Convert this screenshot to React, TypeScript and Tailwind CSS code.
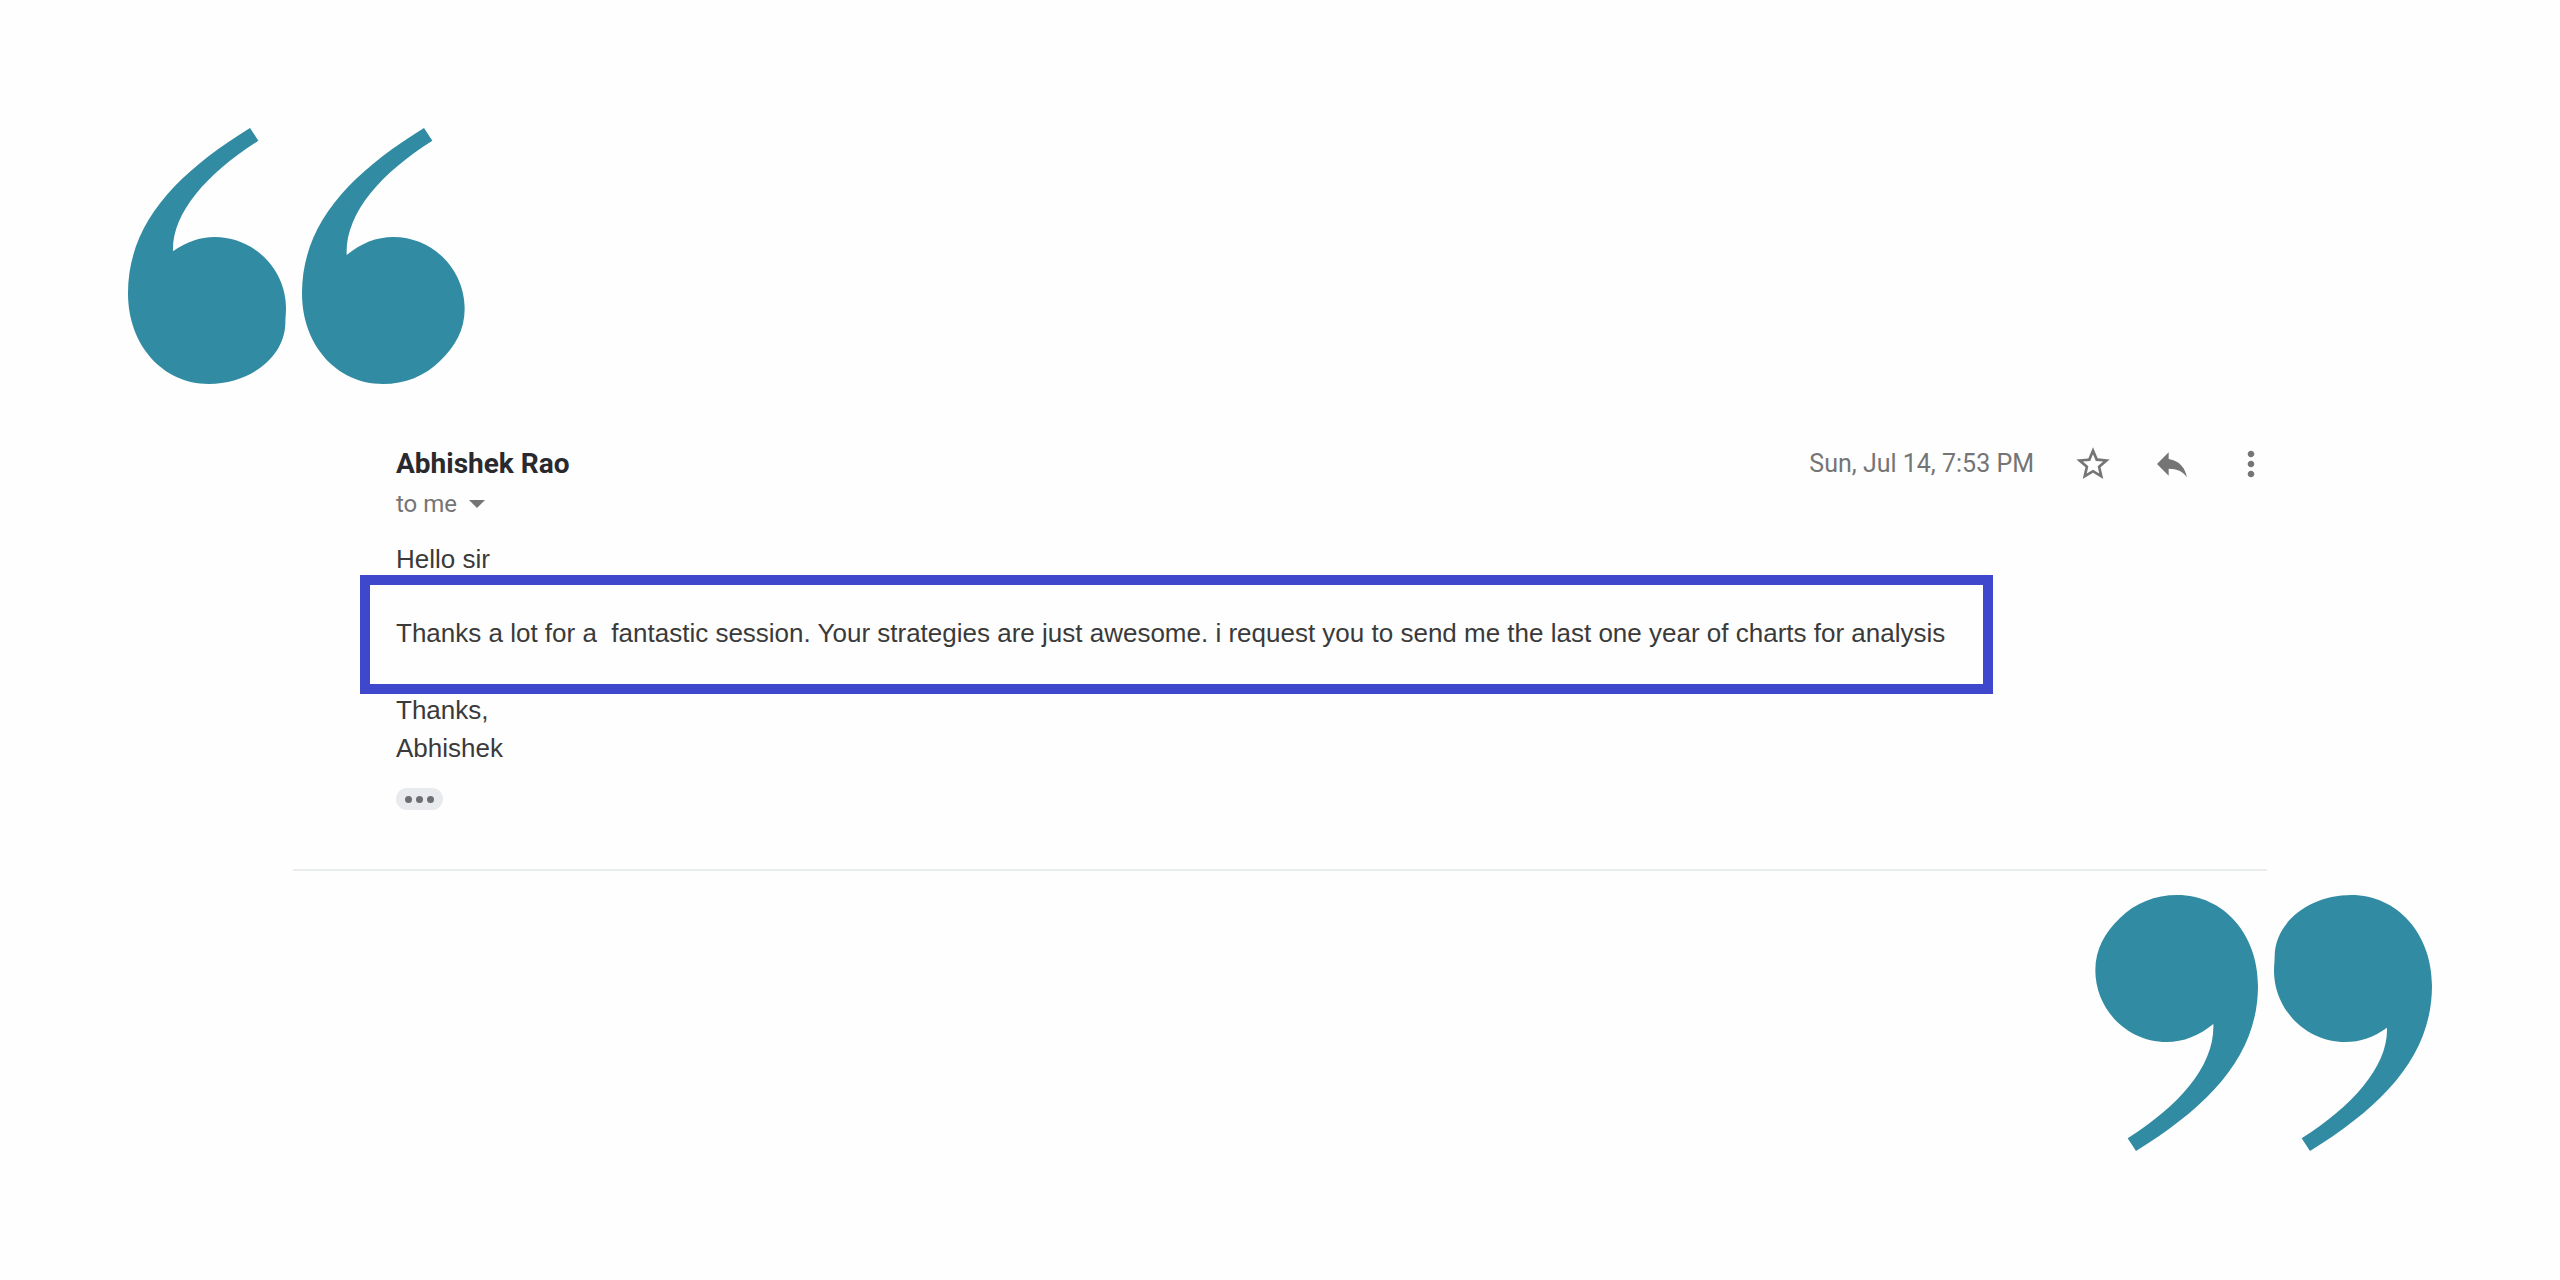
import type { ReactNode } from "react";
import { MdMoreVert, MdReply, MdStarBorder } from "react-icons/md";

function QuoteMark({ className = "" }: { className?: string }) {
  return (
    <svg
      viewBox="54 54 1011 768"
      className={`h-64 w-[337px] fill-[#318ba2] ${className}`}
      aria-hidden="true"
    >
      <path d="M420 54L445 92C290 190 185 310 189 424C228 396 270 381 314 381C432 381 528 478 528 595C528 612 526 622 526 640C524 742 420 822 296 822C158 822 54 705 54 550C54 340 200 190 420 54Z" />
      <path d="M942 54L967 92C812 190 705 310 710 435C752 400 800 381 850 381C968 381 1064 478 1064 596C1064 660 1035 710 990 753C945 798 885 822 818 822C680 822 576 705 576 550C576 340 722 190 942 54Z" />
    </svg>
  );
}

function IconButton({ label, children }: { label: string; children: ReactNode }) {
  return (
    <button
      type="button"
      aria-label={label}
      className="flex size-10 items-center justify-center text-[#757575]"
    >
      {children}
    </button>
  );
}

export default function App() {
  return (
    <main className="flex min-h-screen flex-col bg-[#fefefe] p-32 font-['Liberation_Sans',sans-serif] text-[26px] leading-8 text-[#3a3a3a]">
      <QuoteMark />

      <article className="mx-[165px] border-b-2 border-[#ebeeee] pt-[60px] pb-[59px] pl-[103px]">
        <header className="font-[Roboto,sans-serif] text-[#757575]">
          <div className="-mr-1 flex h-10 items-center justify-between">
            <h1 className="text-[28px] font-bold text-[#2a2a2e]">
              Abhishek Rao
            </h1>
            <div className="flex items-center gap-[39px]">
              <time className="text-[25px]">Sun, Jul 14, 7:53 PM</time>
              <IconButton label="Star">
                <MdStarBorder className="size-10" />
              </IconButton>
              <IconButton label="Reply">
                <MdReply className="size-10" />
              </IconButton>
              <IconButton label="More">
                <MdMoreVert className="size-10" />
              </IconButton>
            </div>
          </div>
          <button type="button" className="mt-1 flex items-center gap-3 text-[24px]">
            to me
            <svg viewBox="0 0 16 8" className="h-2 w-4 fill-current" aria-hidden="true">
              <path d="M0 0H16L8 8Z" />
            </svg>
          </button>
        </header>

        <p className="mt-[23px]">Hello sir</p>
        <p className="-ml-9 max-w-[1633px] border-10 border-[#3f48cc] pt-8 pb-[35px] pl-[26px]">
          Thanks a lot for a&nbsp; fantastic session. Your strategies are just
          awesome. i request you to send me the last one year of charts for
          analysis
        </p>
        <p>Thanks,</p>
        <p className="mt-1.5">Abhishek</p>

        <button
          type="button"
          aria-label="Show trimmed content"
          className="mt-6 flex h-[22px] w-[47px] items-center justify-center gap-1 rounded-full bg-[#e8eaed]"
        >
          <span className="size-[7px] rounded-full bg-[#6b6e72]" />
          <span className="size-[7px] rounded-full bg-[#6b6e72]" />
          <span className="size-[7px] rounded-full bg-[#6b6e72]" />
        </button>
      </article>

      <QuoteMark className="mt-6 rotate-180 self-end" />
    </main>
  );
}
